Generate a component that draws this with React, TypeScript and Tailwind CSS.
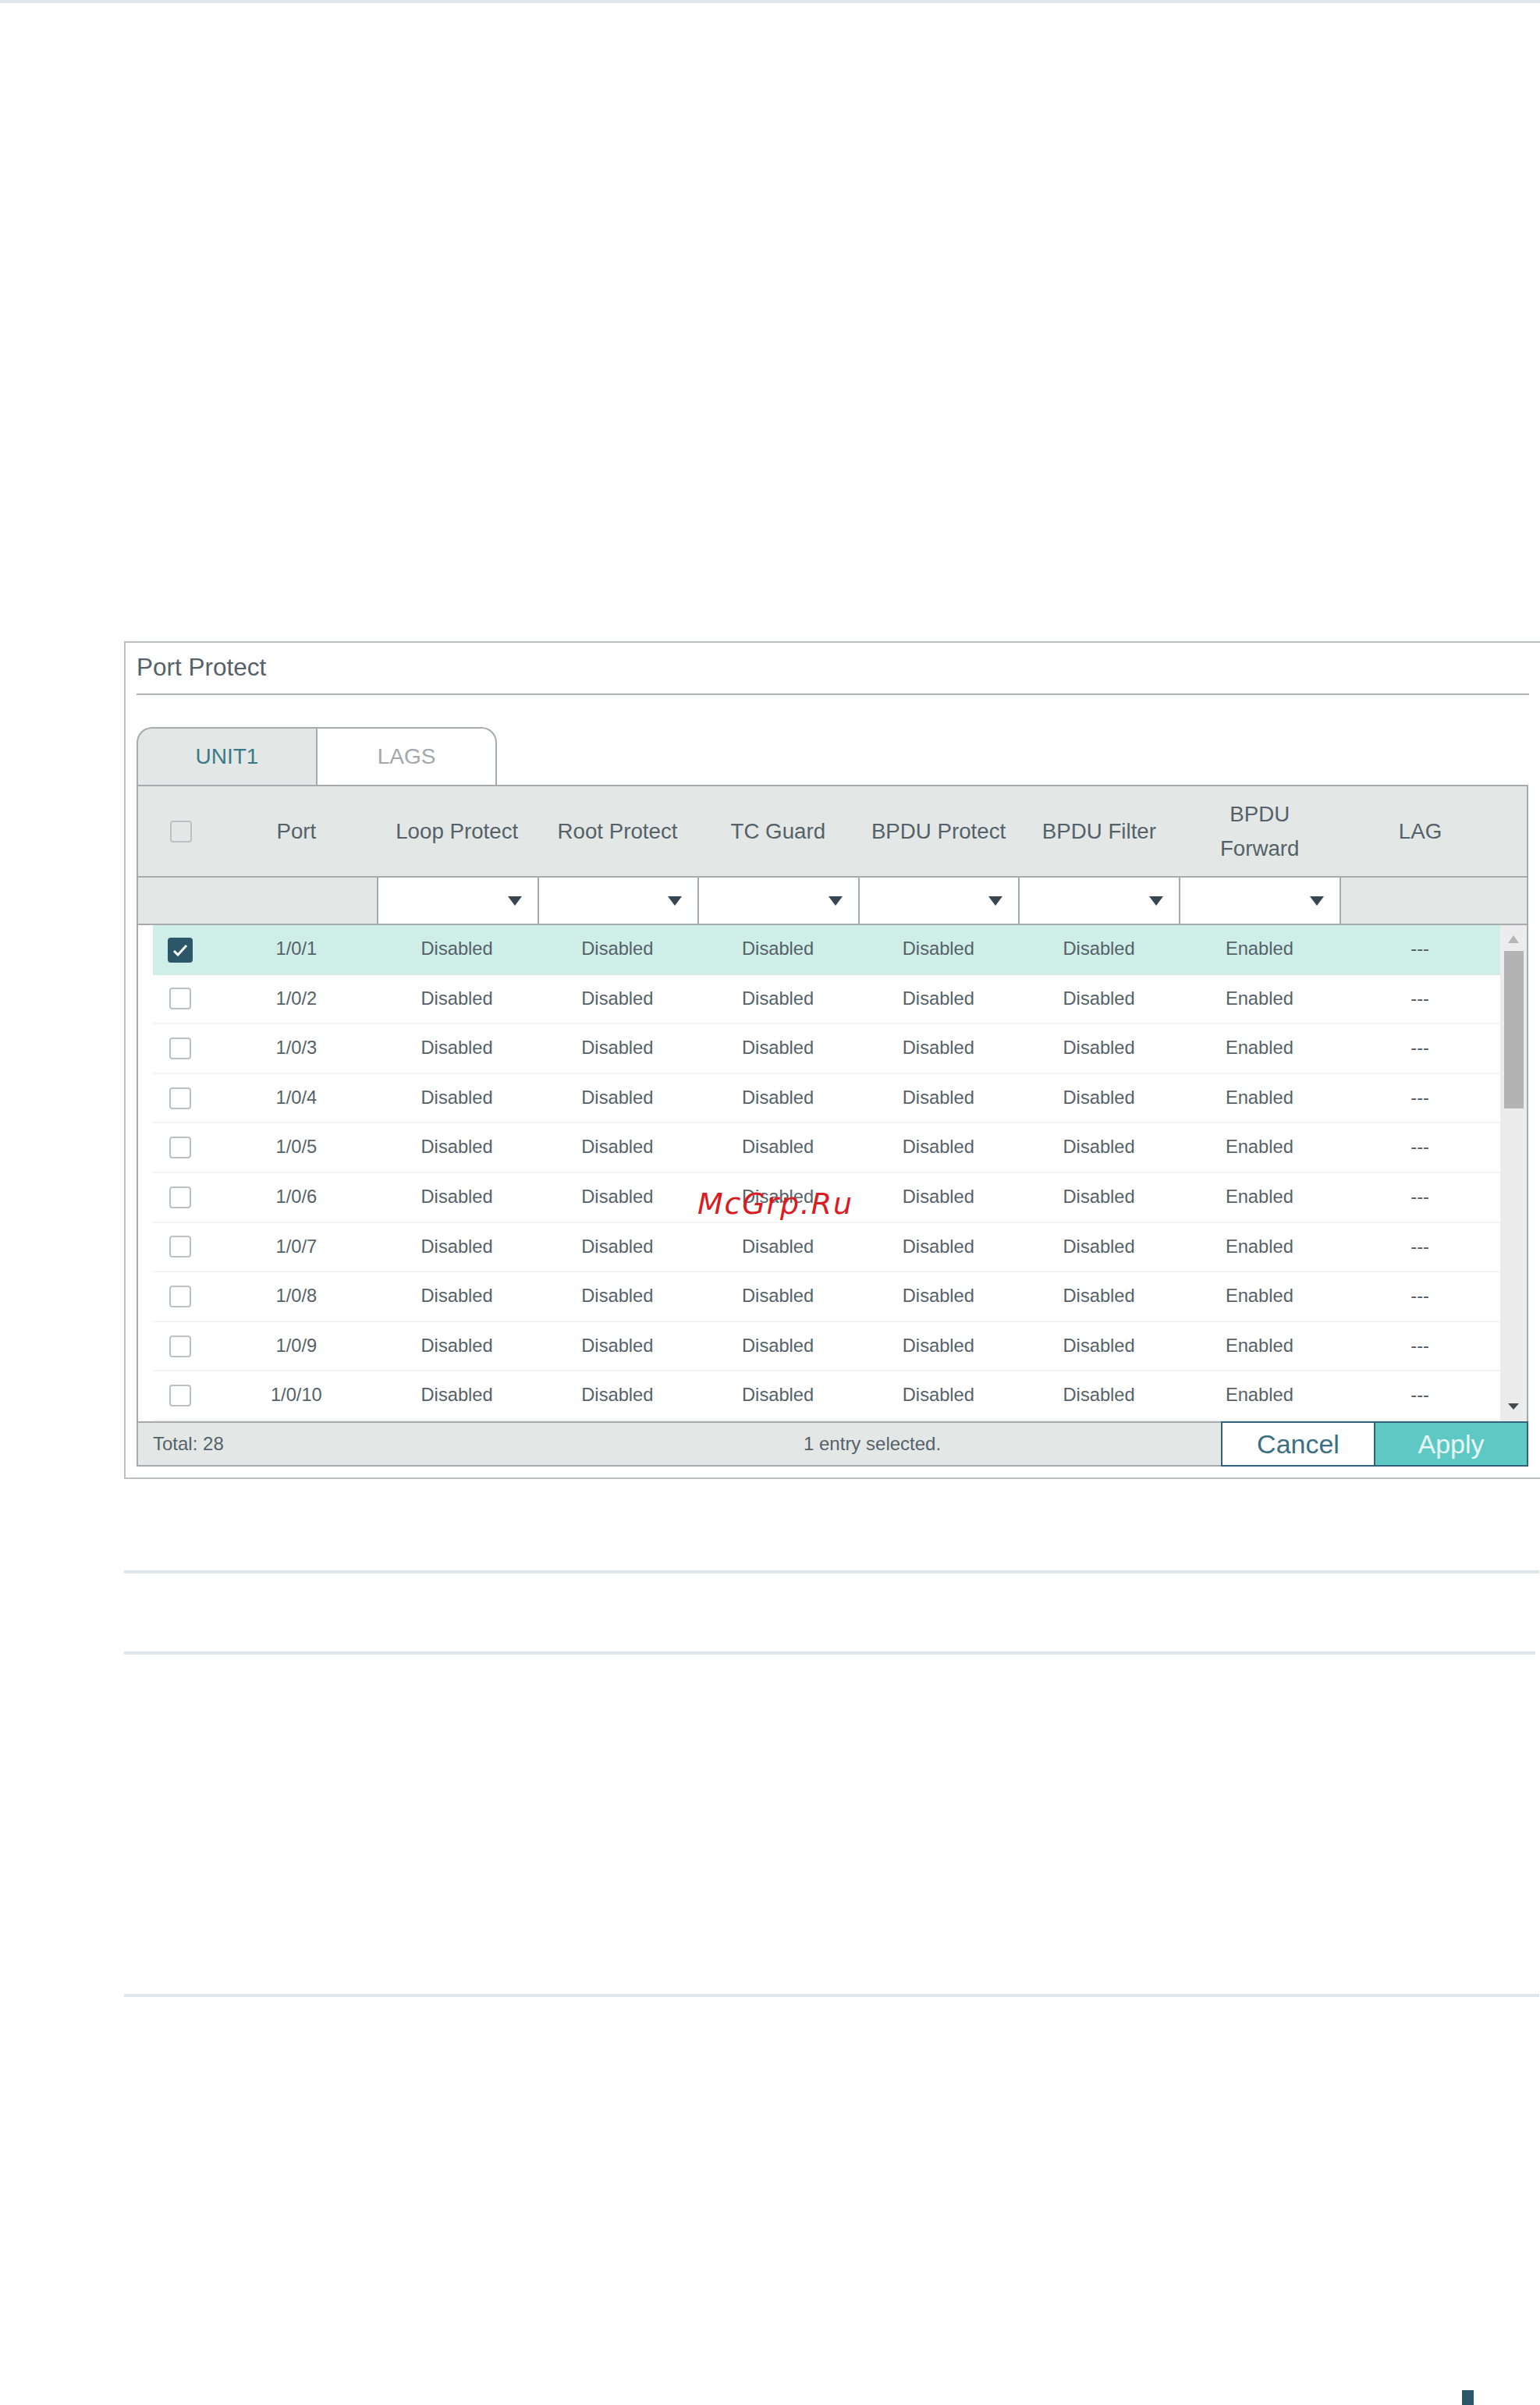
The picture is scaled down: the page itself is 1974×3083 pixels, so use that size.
const FONT = "font-['Liberation_Sans',Arial,sans-serif]"

const columns = ["Loop Protect", "Root Protect", "TC Guard", "BPDU Protect", "BPDU Filter"]

function Caret() {
  return (
    <svg width="18" height="12" viewBox="0 0 18 12" className="fill-[#36454f]">
      <path d="M0 0h18L9 12z" />
    </svg>
  )
}

function Checkbox({ checked }: { checked?: boolean }) {
  if (checked) {
    return (
      <div className="flex h-8 w-8 items-center justify-center rounded-[4px] bg-[#2b5769]">
        <svg width="20" height="16" viewBox="0 0 20 16" fill="none" stroke="#fff" strokeWidth="3">
          <path d="M2 9l5 5L18 2" />
        </svg>
      </div>
    )
  }
  return <div className="h-7 w-7 rounded-[4px] border-2 border-[#bcc1c3] bg-white" />
}

function Row({ n }: { n: number }) {
  const selected = n === 1
  const cell = selected ? "w-[205.8px] pb-[3px] text-center" : "w-[205.8px] text-center"
  return (
    <div
      className={
        selected
          ? "ml-[19px] flex h-[63.6px] items-center bg-[#cfeee8] text-[23.7px]"
          : "ml-[19px] flex h-[63.6px] items-center border-b-2 border-[#f3f4f4] bg-white text-[23.7px]"
      }
    >
      <div className="flex w-[81px] justify-center pr-[10px]">
        <Checkbox checked={selected} />
      </div>
      <div className={cell}>1/0/{n}</div>
      {[0, 1, 2, 3, 4].map((i) => (
        <div key={i} className={cell}>
          Disabled
        </div>
      ))}
      <div className={cell}>Enabled</div>
      <div className={cell}>---</div>
    </div>
  )
}

export default function App() {
  const rows = [1, 2, 3, 4, 5, 6, 7, 8, 9, 10]
  return (
    <div className={`${FONT} relative h-[3083px] w-[1974px] overflow-hidden bg-white text-[#566269]`}>
      <div className="h-1 bg-[#dce6eb]" />

      <div className="mt-[818px] ml-[159px] h-[1074px] w-[1815px] border-2 border-r-0 border-[#bcbfc0] bg-white px-[14px]">
        <div className="h-[67px] border-b-2 border-[#b0b4b6] pt-[9px] text-[31.5px] leading-[44px]">Port Protect</div>

        {/* tabs */}
        <div className="mt-[41px] flex h-[74px] w-[462px] text-[28px]">
          <div className="flex w-[230px] items-center justify-center rounded-tl-[20px] border-t-2 border-l-2 border-[#a6abad] bg-[#e3e7e6] text-[#3d7a87]">
            UNIT1
          </div>
          <div className="flex w-[232px] items-center justify-center rounded-tr-[20px] border-x-2 border-t-2 border-[#a6abad] bg-white text-[#a3a8ab]">
            LAGS
          </div>
        </div>

        {/* table */}
        <div className="w-[1784px] border-x-2 border-[#a6abad]">
          <div className="flex h-[117px] items-center border-t-2 border-[#a6abad] bg-[#e3e7e6] text-[27.7px] leading-[44px]">
            <div className="flex w-[100px] justify-center pl-[10px]">
              <div className="h-7 w-7 rounded-[4px] border-2 border-[#bcc1c3] bg-[#e3e7e6]" />
            </div>
            <div className="w-[205.8px] text-center">Port</div>
            {columns.map((c) => (
              <div key={c} className="w-[205.8px] text-center">
                {c}
              </div>
            ))}
            <div className="w-[205.8px] text-center">
              BPDU
              <br />
              Forward
            </div>
            <div className="w-[205.8px] text-center">LAG</div>
          </div>

          {/* filter row */}
          <div className="flex h-[63px] border-y-2 border-[#a6abad] bg-[#e3e7e6]">
            <div className="w-[306px]" />
            {[0, 1, 2, 3, 4, 5].map((i) => (
              <div key={i} className="flex w-[205.6px] items-center justify-end border-l-2 border-[#a6abad] bg-white pt-[1px] pr-[20px]">
                <Caret />
              </div>
            ))}
            <div className="flex-1 border-l-2 border-[#a6abad]" />
          </div>

          {/* rows + scrollbar */}
          <div className="relative h-[636px] pr-[34px]">
            {rows.map((n) => (
              <Row key={n} n={n} />
            ))}
            <div className="absolute top-0 right-0 flex h-[636px] w-[34px] flex-col items-center bg-[#ececec]">
              <svg width="14" height="10" viewBox="0 0 14 10" className="mt-[13px] fill-[#b5b5b5]">
                <path d="M7 0l7 10H0z" />
              </svg>
              <div className="mt-[10px] h-[202px] w-[25px] bg-[#b3b3b3]" />
              <svg width="14" height="8" viewBox="0 0 14 8" className="mt-auto mb-[15px] fill-[#444b50]">
                <path d="M0 0h14L7 8z" />
              </svg>
            </div>
          </div>
        </div>

        {/* footer */}
        <div className="flex h-[58px] w-[1784px] items-stretch text-[24px]">
          <div className="flex flex-1 items-center border-y-2 border-l-2 border-[#a6abad] bg-[#e3e7e6] pl-[19px]">
            <span className="w-[834px]">Total: 28</span>
            <span>1 entry selected.</span>
          </div>
          <div className="flex w-[198px] items-center justify-center border-2 border-[#33637a] bg-white text-[34px] text-[#3b7080]">
            Cancel
          </div>
          <div className="-ml-[2px] flex w-[198px] items-center justify-center border-2 border-[#33637a] bg-[#5ec9c4] text-[34px] text-[#e8f8f6]">
            Apply
          </div>
        </div>
      </div>

      <div className="mt-[117px] ml-[159px] h-1 w-[1814px] bg-[#dce6eb]" />
      <div className="mt-[100px] ml-[159px] h-1 w-[1809px] bg-[#dce6eb]" />
      <div className="mt-[435px] ml-[159px] h-1 w-[1814px] bg-[#dce6eb]" />

      {/* page marker */}
      <div className="absolute right-[85px] bottom-0 h-[19px] w-[15px] bg-[#2b5769]" />

      {/* watermark */}
      <div className="absolute top-[1519px] left-[894px] font-['DejaVu_Sans',sans-serif] text-[38px] leading-[48px] tracking-[1.8px] text-[#d91c23] italic">
        McGrp.Ru
      </div>
    </div>
  )
}
